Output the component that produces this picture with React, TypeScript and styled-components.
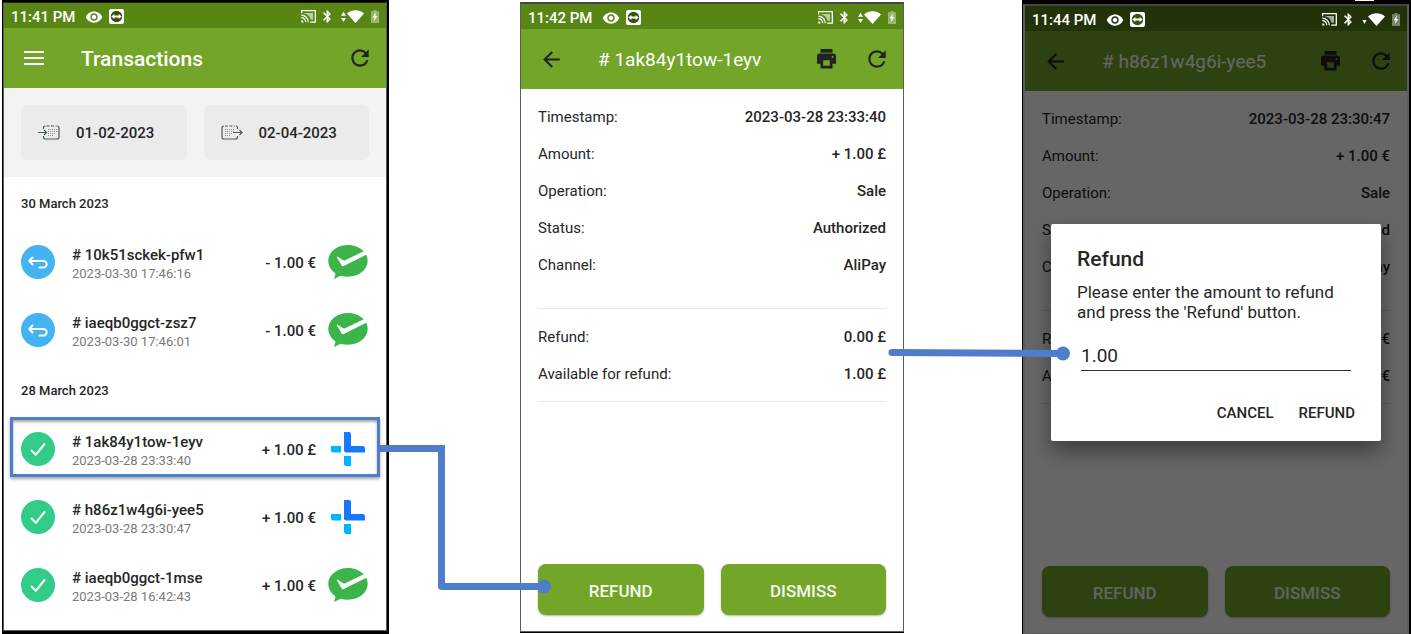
import React from "react";
import styled, { createGlobalStyle } from "styled-components";
import { MdArrowBack, MdRefresh, MdVisibility } from "react-icons/md";

const GlobalStyle = createGlobalStyle`
  *, *::before, *::after { box-sizing: border-box; }
  body {
    margin: 0;
    background: #fff;
    color: #262626;
    font-family: Roboto, "Liberation Sans", sans-serif;
    font-size: 15px;
  }
  button, input { font: inherit; color: inherit; }
  h1, h2, p, dl, dd, ul { margin: 0; padding: 0; }
  svg { display: block; }
`;

const BLUE = "#4f7dcc";
const GREEN = "#72a528";

/* ---------- page ---------- */

const Stage = styled.main`
  display: grid;
  grid-template-columns: minmax(0, 387fr) minmax(0, 131fr) minmax(0, 384fr) minmax(0, 118fr) minmax(0, 389fr);
  min-height: 100vh;
  padding-left: 2px;
`;

type Frame = "bold" | "thin" | "dark";

const bezels: Record<Frame, string> = {
  bold: "border-width: 2px 2px 3px 1px; border-color: #000;",
  thin: "border-width: 0 0 1px; border-color: #000; margin: 2px 0 1px;",
  dark: "border-width: 4px 2px 0 1px; border-color: #000;",
};

const Bezel = styled.section<{ $frame: Frame }>`
  position: relative;
  display: flex;
  border-style: solid;
  ${(p) => bezels[p.$frame]}
`;

const Screen = styled.div<{ $frame: Frame }>`
  flex: 1;
  min-width: 0;
  display: flex;
  flex-direction: column;
  background: #fff;
  border: 1px solid #5c5c5c;
  border-top-width: ${(p) => (p.$frame === "bold" ? 1 : 2)}px;
  border-left-width: ${(p) => (p.$frame === "dark" ? 2 : 1)}px;
  border-right-width: ${(p) => (p.$frame === "dark" ? 2 : 1)}px;
  border-top-color: ${(p) => (p.$frame === "bold" ? "#222" : "#444")};
`;

const BezelMark = styled.span`
  position: absolute;
  top: -4px;
  right: 35px;
  width: 19px;
  height: 1px;
  background: #fff;
`;

/* ---------- status bar ---------- */

const StatusRow = styled.div<{ $dim?: boolean }>`
  height: 25px;
  display: flex;
  align-items: center;
  padding: 2px 7px 0;
  color: #fff;
  background: ${(p) => (p.$dim ? "#22330a" : "#588514")};
`;

const Clock = styled.time`
  font-weight: 500;
  width: 74px;
  white-space: nowrap;
`;

const StatusIcons = styled.div<{ $end?: boolean }>`
  display: flex;
  align-items: center;
  gap: ${(p) => (p.$end ? 7 : 6)}px;
  margin-left: ${(p) => (p.$end ? "auto" : "0")};
`;

const Signal = styled.span`
  display: flex;
  align-items: center;
  gap: 1px;
`;

const LinkIcon = () => (
  <svg width="15" height="15" viewBox="0 0 15 15">
    <rect width="15" height="15" rx="2" fill="#fff" />
    <circle cx="7.5" cy="7.5" r="5.7" fill="#36510f" />
    <path d="M2.2 7.5 5.4 4.9v1.7h4.2V4.9l3.2 2.6-3.2 2.6V8.4H5.4v1.7z" fill="#fff" />
  </svg>
);

const CastIcon = () => (
  <svg width="15" height="13" viewBox="0 0 15 13" fill="none" stroke="#fff">
    <path d="M.6 3.2V.7h13.7v11.4H9.2" strokeWidth="1.3" />
    <path d="M3.2 3h8.8v6.800H9.600C9 6.400 6.400 3.800 3.200 3.400z" fill="#fff" fillOpacity=".6" stroke="none" />
    <path d="M.3 5.200a7 7 0 0 1 7 7M.3 7.700a4.500 4.500 0 0 1 4.500 4.500" strokeWidth="1.200" />
    <path d="M.3 10.200a2.300 2.300 0 0 1 2.300 2.300H.3z" fill="#fff" stroke="none" />
  </svg>
);

const BluetoothIcon = () => (
  <svg width="11" height="13" viewBox="5 1 18 22" fill="#fff" stroke="#fff" strokeWidth=".6">
    <path d="M17.710 7.710 12 2h-1v7.590L6.410 5 5 6.410 10.590 12 5 17.590 6.410 19 11 14.410V22h1l5.710-5.710L13.410 12zM13 5.830l1.880 1.880L13 9.590zm1.880 10.460L13 18.170v-3.760z" />
  </svg>
);

const ArrowsIcon = ({ downOnly }: { downOnly?: boolean }) => (
  <svg width="5" height="12" viewBox="0 0 5 12" fill="#fff">
    {downOnly ? <path d="M.5 6h4L2.500 10z" /> : <path d="M0 4.700h5L2.500.8zM0 7h5L2.500 11z" />}
  </svg>
);

const WifiIcon = () => (
  <svg width="17" height="13" viewBox="0 0 17 13" fill="#fff">
    <path d="M0 3.400C5-.9 12-.9 17 3.400L8.500 13z" />
  </svg>
);

const BatteryIcon = () => (
  <svg width="8" height="13" viewBox="0 0 8 13">
    <path d="M2.500 0h3v1.300H8V13H0V1.300h2.500z" fill="#fff" fillOpacity=".4" />
    <path d="M4.800 2.600 1.700 7.300h1.800l-.5 3.700 3.300-4.900H4.500z" fill="#fff" />
  </svg>
);

const StatusBar = ({ time, dim }: { time: string; dim?: boolean }) => (
  <StatusRow $dim={dim}>
    <Clock>{time}</Clock>
    <StatusIcons>
      <MdVisibility size={18} />
      <LinkIcon />
    </StatusIcons>
    <StatusIcons $end>
      <CastIcon />
      <BluetoothIcon />
      <Signal>
        <ArrowsIcon downOnly={dim} />
        <WifiIcon />
      </Signal>
      <BatteryIcon />
    </StatusIcons>
  </StatusRow>
);

/* ---------- app bar ---------- */

const AppBar = styled.header`
  height: 60px;
  flex: none;
  display: flex;
  align-items: center;
  padding: 0 13px 0 17px;
  background: ${GREEN};
  color: #fff;
`;

const IconButton = styled.button<{ $light?: boolean }>`
  display: grid;
  place-items: center;
  width: 26px;
  height: 26px;
  padding: 0;
  border: 0;
  background: none;
  color: ${(p) => (p.$light ? "#fff" : "#222")};
`;

const BarTitle = styled.h1<{ $strong?: boolean }>`
  flex: 1;
  min-width: 0;
  margin-left: 34px;
  padding-top: 2px;
  font-size: ${(p) => (p.$strong ? 21 : 19)}px;
  font-weight: ${(p) => (p.$strong ? 500 : 400)};
  line-height: 24px;
  white-space: nowrap;
`;

const BarActions = styled.div`
  display: flex;
  gap: 25px;
`;

const MenuIcon = () => (
  <svg width="20" height="14" viewBox="0 0 20 14" stroke="#fff" strokeWidth="2">
    <path d="M0 1h20M0 7h20M0 13h20" />
  </svg>
);

const PrinterIcon = () => (
  <svg width="19" height="20" viewBox="0 0 19 20" fill="currentColor">
    <path d="M3.500 0h12v3.700h-12z" />
    <path
      fillRule="evenodd"
      d="M2.700 4.600h13.600A2.700 2.700 0 0 1 19 7.300v7.500h-3.500v4.700h-12v-4.700H0V7.300a2.700 2.700 0 0 1 2.700-2.700zM6.200 11.300v5.400h6.600v-5.400zM15.600 7a1 1 0 1 0 0 2 1 1 0 0 0 0-2z"
    />
  </svg>
);

/* ---------- transactions ---------- */

const Filters = styled.div`
  display: grid;
  grid-template-columns: 1fr 1fr;
  gap: 17px;
  padding: 17px;
  background: #f3f3f3;
`;

const DateButton = styled.button`
  display: flex;
  align-items: center;
  gap: 16px;
  height: 55px;
  padding: 0 17px;
  border: 0;
  border-radius: 6px;
  background: #ebebeb;
  font-weight: 500;
  white-space: nowrap;
`;

const dots = [
  [9, 5], [11, 5], [13, 5], [15, 5], [17, 5],
  [9, 7], [11, 7], [13, 7], [15, 7], [17, 7],
  [9, 9], [11, 9], [13, 9], [15, 9],
  [9, 11], [11, 11], [13, 11],
];

const CalendarIcon = ({ out }: { out?: boolean }) => (
  <svg width="22" height="15" viewBox="0 0 22 15" fill="none" stroke="#4d5a61" strokeWidth="1.200">
    {out ? (
      <>
        <path d="M16.500 4V2.500q0-1.500-1.500-1.500M3 1Q1 1 1 3v9q0 2 2 2h11.500q2 0 2-2v-1" />
        <path d="M4 1h10" strokeDasharray="3 1.500" />
        <path d="M12 7.500h9M18.500 5 21 7.500 18.500 10" />
      </>
    ) : (
      <>
        <path d="M5.500 4V3q0-2 2-2M19 1q2 0 2 2v9q0 2-2 2H7.500q-2 0-2-2v-1" />
        <path d="M8.500 1h10" strokeDasharray="3 1.500" />
        <path d="M0 7.500h8M6 5l2.500 2.500L6 10" />
      </>
    )}
    <g fill="#8b9398" stroke="none">
      {dots.map(([x, y]) => (
        <rect key={`${x}-${y}`} x={out ? x - 5 : x + 1} y={y - 1} width="1" height="1" />
      ))}
    </g>
  </svg>
);

const DayLabel = styled.h2`
  height: 51px;
  padding: 0 17px;
  font-size: 13px;
  font-weight: 500;
  line-height: 53px;
`;

const List = styled.ul`
  list-style: none;
`;

const Row = styled.li`
  position: relative;
  display: flex;
  align-items: center;
  height: 68px;
  padding: 0 17px;
`;

const Highlight = styled.span`
  position: absolute;
  inset: 2px 6px 6px;
  border: 3px solid ${BLUE};
  box-shadow: 0 2px 3px rgba(0, 0, 0, 0.35), inset 0 2px 3px rgba(0, 0, 0, 0.35);
`;

const Names = styled.div`
  flex: 1;
  min-width: 0;
  margin-left: 17px;
  padding-top: 2px;
  white-space: nowrap;
`;

const Code = styled.p`
  font-weight: 500;
  line-height: 20px;
`;

const Stamp = styled.p`
  font-size: 13px;
  line-height: 17px;
  color: #7a7a7a;
`;

const Sum = styled.span`
  margin-right: 12px;
  padding-top: 2px;
  font-weight: 500;
`;

const KindIcon = ({ refund }: { refund?: boolean }) => (
  <svg width="34" height="34" viewBox="0 0 34 34" fill="none" stroke="#fff" strokeLinecap="round" strokeLinejoin="round">
    <circle cx="17" cy="17" r="17" fill={refund ? "#43b3f2" : "#32cb88"} stroke="none" />
    {refund ? (
      <path d="M11.500 12.500 8.300 16l3.200 3.500M9 16h13.500a3.200 3.200 0 0 1 0 6.400H18.500" strokeWidth="2" />
    ) : (
      <path d="M10.500 18.500l4.300 4.300L23.500 12" strokeWidth="2" />
    )}
  </svg>
);

const WeChatIcon = () => (
  <svg width="41" height="34" viewBox="0 0 41 34">
    <path
      fill="#3bb54a"
      d="M20 0C8.800 0 .3 7.100.3 15.800c0 5.200 2.900 9.700 7.300 12.600L6 34l6.700-3.300c2.300.7 4.700 1 7.300 1 11 0 19.700-7.100 19.700-15.900 0-2.100-.5-4.100-1.400-6L15.700 21c-1 .5-1.700.2-2.200-.7L9 12.400c-.2-.7.3-1 .9-.6l4.800 3.300c.8.500 1.600.5 2.500.1L35.700 6.300C32.200 2.500 26.500 0 20 0z"
    />
  </svg>
);

const AliPayIcon = () => (
  <svg width="41" height="34" viewBox="0 0 41 34">
    <path fill="#1677ff" d="M16 0h5q2 0 2 2v12H34.500q2.500 0 2.500 2.500V20.500H18q-2 0-2-2z" />
    <path fill="#00b4ff" d="M3 14h10v6.500H5.500q-2.500 0-2.500-2.500zM16 24h7v10H18.500q-2.500 0-2.500-2.500z" />
  </svg>
);

interface Transaction {
  code: string;
  stamp: string;
  sum: string;
  channel: "wechat" | "alipay";
  refund?: boolean;
  selected?: boolean;
}

const days: { label: string; items: Transaction[] }[] = [
  {
    label: "30 March 2023",
    items: [
      { code: "# 10k51sckek-pfw1", stamp: "2023-03-30 17:46:16", sum: "- 1.00 €", channel: "wechat", refund: true },
      { code: "# iaeqb0ggct-zsz7", stamp: "2023-03-30 17:46:01", sum: "- 1.00 €", channel: "wechat", refund: true },
    ],
  },
  {
    label: "28 March 2023",
    items: [
      { code: "# 1ak84y1tow-1eyv", stamp: "2023-03-28 23:33:40", sum: "+ 1.00 £", channel: "alipay", selected: true },
      { code: "# h86z1w4g6i-yee5", stamp: "2023-03-28 23:30:47", sum: "+ 1.00 €", channel: "alipay" },
      { code: "# iaeqb0ggct-1mse", stamp: "2023-03-28 16:42:43", sum: "+ 1.00 €", channel: "wechat" },
    ],
  },
];

const TransactionsPhone = () => (
  <Bezel $frame="bold">
    <Screen $frame="bold">
      <StatusBar time="11:41 PM" />
      <AppBar>
        <IconButton $light aria-label="Menu">
          <MenuIcon />
        </IconButton>
        <BarTitle $strong>Transactions</BarTitle>
        <IconButton aria-label="Refresh">
          <MdRefresh size={26} />
        </IconButton>
      </AppBar>
      <Filters>
        <DateButton>
          <CalendarIcon />
          01-02-2023
        </DateButton>
        <DateButton>
          <CalendarIcon out />
          02-04-2023
        </DateButton>
      </Filters>
      {days.map((day) => (
        <React.Fragment key={day.label}>
          <DayLabel>{day.label}</DayLabel>
          <List>
            {day.items.map((t) => (
              <Row key={t.code}>
                {t.selected && <Highlight />}
                <KindIcon refund={t.refund} />
                <Names>
                  <Code>{t.code}</Code>
                  <Stamp>{t.stamp}</Stamp>
                </Names>
                <Sum>{t.sum}</Sum>
                {t.channel === "wechat" ? <WeChatIcon /> : <AliPayIcon />}
              </Row>
            ))}
          </List>
        </React.Fragment>
      ))}
    </Screen>
  </Bezel>
);

/* ---------- details ---------- */

const Content = styled.div`
  position: relative;
  flex: 1;
  display: flex;
  flex-direction: column;
`;

const Details = styled.dl<{ $first?: boolean }>`
  margin: 0 17px;
  padding: ${(p) => (p.$first ? "10px 0 24px" : "10px 0 8px")};
  border-bottom: 1px solid #e6e6e6;
`;

const Detail = styled.div`
  display: flex;
  justify-content: space-between;
  line-height: 37px;
`;

const Value = styled.dd`
  font-weight: 500;
`;

const Actions = styled.div`
  display: grid;
  grid-template-columns: 1fr 1fr;
  gap: 17px;
  margin-top: auto;
  padding: 16px 17px;
`;

const ActionButton = styled.button`
  height: 51px;
  padding: 2px 0 0;
  border: 0;
  border-radius: 8px;
  background: ${GREEN};
  box-shadow: 0 1px 2px rgba(0, 0, 0, 0.3);
  color: #f4f8ee;
  font-size: 17px;
  font-weight: 500;
`;

const Scrim = styled.div`
  position: absolute;
  inset: 0;
  padding: 193px 26px 0;
  background: rgba(0, 0, 0, 0.6);
`;

const Dialog = styled.form`
  display: flex;
  flex-direction: column;
  padding: 22px 26px 18px;
  border-radius: 2px;
  background: #fff;
  box-shadow: 0 10px 20px rgba(0, 0, 0, 0.4);
`;

const DialogTitle = styled.h2`
  font-size: 21px;
  font-weight: 500;
  line-height: 26px;
`;

const DialogText = styled.label`
  margin-top: 10px;
  font-size: 17px;
  line-height: 20px;
`;

const AmountInput = styled.input`
  height: 30px;
  margin: 19px 4px 0;
  padding: 0;
  border: 0;
  border-bottom: 1px solid #333;
  border-radius: 0;
  background: none;
  outline: 0;
  font-size: 19px;
  line-height: 28px;
`;

const DialogActions = styled.div`
  display: flex;
  justify-content: flex-end;
  gap: 25px;
  margin-top: 32px;
`;

const TextButton = styled.button`
  padding: 0;
  border: 0;
  background: none;
  font-weight: 500;
  line-height: 20px;
`;

interface DetailsProps {
  time: string;
  code: string;
  stamp: string;
  currency: string;
  frame: Frame;
  dialog?: boolean;
}

const DetailsPhone = ({ time, code, stamp, currency, frame, dialog }: DetailsProps) => (
  <Bezel $frame={frame}>
    {dialog && <BezelMark />}
    <Screen $frame={frame}>
      <StatusBar time={time} dim={dialog} />
      <Content>
        <AppBar>
          <IconButton aria-label="Back">
            <MdArrowBack size={25} />
          </IconButton>
          <BarTitle># {code}</BarTitle>
          <BarActions>
            <IconButton aria-label="Print">
              <PrinterIcon />
            </IconButton>
            <IconButton aria-label="Refresh">
              <MdRefresh size={26} />
            </IconButton>
          </BarActions>
        </AppBar>
        <Details $first>
          <Detail><dt>Timestamp:</dt><Value>{stamp}</Value></Detail>
          <Detail><dt>Amount:</dt><Value>+ 1.00 {currency}</Value></Detail>
          <Detail><dt>Operation:</dt><Value>Sale</Value></Detail>
          <Detail><dt>Status:</dt><Value>Authorized</Value></Detail>
          <Detail><dt>Channel:</dt><Value>AliPay</Value></Detail>
        </Details>
        <Details>
          <Detail><dt>Refund:</dt><Value>0.00 {currency}</Value></Detail>
          <Detail><dt>Available for refund:</dt><Value>1.00 {currency}</Value></Detail>
        </Details>
        <Actions>
          <ActionButton>REFUND</ActionButton>
          <ActionButton>DISMISS</ActionButton>
        </Actions>
        {dialog && (
          <Scrim>
            <Dialog role="dialog" aria-label="Refund">
              <DialogTitle>Refund</DialogTitle>
              <DialogText htmlFor="amount">
                Please enter the amount to refund and press the 'Refund' button.
              </DialogText>
              <AmountInput id="amount" defaultValue="1.00" />
              <DialogActions>
                <TextButton type="button">CANCEL</TextButton>
                <TextButton type="button">REFUND</TextButton>
              </DialogActions>
            </Dialog>
          </Scrim>
        )}
      </Content>
    </Screen>
  </Bezel>
);

/* ---------- connectors ---------- */

const Gap = styled.div`
  position: relative;
  z-index: 1;
`;

const Wire = styled.svg<{ $before: number; $after: number }>`
  position: absolute;
  top: 0;
  left: ${(p) => -p.$before}px;
  width: calc(100% + ${(p) => p.$before + p.$after}px);
  height: 100%;
  overflow: visible;
  pointer-events: none;
  stroke: ${BLUE};
  stroke-width: 7px;
  fill: ${BLUE};
`;

export default function App() {
  return (
    <>
      <GlobalStyle />
      <Stage>
        <TransactionsPhone />
        <Gap>
          <Wire $before={9} $after={24} aria-hidden="true">
            <line x1="0" y1="448.500" x2="37.500%" y2="448.500" />
            <line x1="37.500%" y1="445" x2="37.500%" y2="586.500" />
            <line x1="37.500%" y1="586.500" x2="100%" y2="586.500" />
            <circle cx="37.500%" cy="586.500" r="3.500" stroke="none" />
            <circle cx="100%" cy="586.500" r="7" stroke="none" />
          </Wire>
        </Gap>
        <DetailsPhone time="11:42 PM" code="1ak84y1tow-1eyv" stamp="2023-03-28 23:33:40" currency="£" frame="thin" />
        <Gap>
          <Wire $before={12} $after={41} aria-hidden="true">
            <line x1="0" y1="352.500" x2="100%" y2="353.500" strokeLinecap="round" />
            <circle cx="100%" cy="353.500" r="7" stroke="none" />
          </Wire>
        </Gap>
        <DetailsPhone time="11:44 PM" code="h86z1w4g6i-yee5" stamp="2023-03-28 23:30:47" currency="€" frame="dark" dialog />
      </Stage>
    </>
  );
}
